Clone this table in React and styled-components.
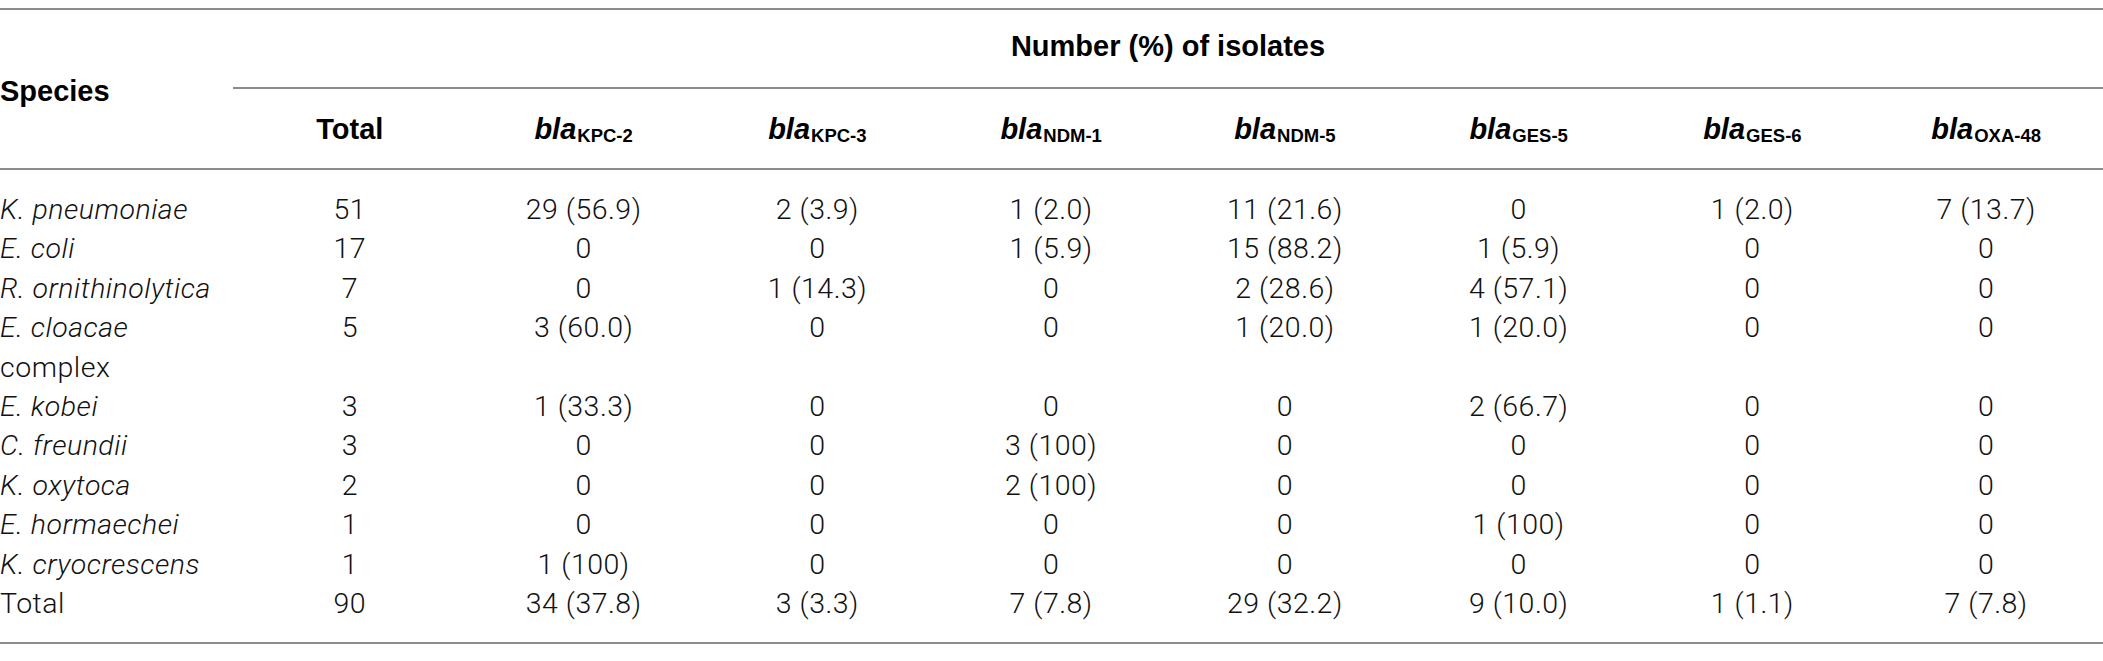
import React from "react";
import styled, { createGlobalStyle } from "styled-components";

const genes = ["KPC-2", "KPC-3", "NDM-1", "NDM-5", "GES-5", "GES-6", "OXA-48"];

const rows = [
  { species: "K. pneumoniae", total: "51", values: ["29 (56.9)", "2 (3.9)", "1 (2.0)", "11 (21.6)", "0", "1 (2.0)", "7 (13.7)"] },
  { species: "E. coli", total: "17", values: ["0", "0", "1 (5.9)", "15 (88.2)", "1 (5.9)", "0", "0"] },
  { species: "R. ornithinolytica", total: "7", values: ["0", "1 (14.3)", "0", "2 (28.6)", "4 (57.1)", "0", "0"] },
  { species: "E. cloacae", extra: "complex", total: "5", values: ["3 (60.0)", "0", "0", "1 (20.0)", "1 (20.0)", "0", "0"] },
  { species: "E. kobei", total: "3", values: ["1 (33.3)", "0", "0", "0", "2 (66.7)", "0", "0"] },
  { species: "C. freundii", total: "3", values: ["0", "0", "3 (100)", "0", "0", "0", "0"] },
  { species: "K. oxytoca", total: "2", values: ["0", "0", "2 (100)", "0", "0", "0", "0"] },
  { species: "E. hormaechei", total: "1", values: ["0", "0", "0", "0", "1 (100)", "0", "0"] },
  { species: "K. cryocrescens", total: "1", values: ["1 (100)", "0", "0", "0", "0", "0", "0"] },
  { species: "Total", plain: true, total: "90", values: ["34 (37.8)", "3 (3.3)", "7 (7.8)", "29 (32.2)", "9 (10.0)", "1 (1.1)", "7 (7.8)"] },
];

function App() {
  return (
    <>
      <GlobalStyle />
      <Page>
        <Table>
          <Head>
            <SpeciesHead>Species</SpeciesHead>
            <GroupHead>Number (%) of isolates</GroupHead>
            <ColHead>Total</ColHead>
            {genes.map((g) => (
              <ColHead key={g}>
                <Gene>bla</Gene>
                <Sub>{g}</Sub>
              </ColHead>
            ))}
          </Head>
          <Body>
            {rows.map((r) => (
              <Row key={r.species}>
                <SpeciesCell $plain={r.plain}>
                  {r.species}
                  {r.extra && <Plain>{r.extra}</Plain>}
                </SpeciesCell>
                <Cell>{r.total}</Cell>
                {r.values.map((v, i) => (
                  <Cell key={i}>{v}</Cell>
                ))}
              </Row>
            ))}
          </Body>
        </Table>
      </Page>
    </>
  );
}

export default App;

const GlobalStyle = createGlobalStyle`
  body {
    margin: 0;
    background: #ffffff;
    font-family: Roboto, "Liberation Sans", Arial, sans-serif;
    color: #111111;
  }
`;

const Page = styled.div`
  width: 2103px;
  height: 661px;
  padding-top: 8px;
  box-sizing: border-box;
  overflow: hidden;
`;

const Table = styled.div`
  border-top: 2px solid #8c8c8c;
  border-bottom: 2px solid #8c8c8c;
`;

const Head = styled.div`
  display: grid;
  grid-template-columns: 233px repeat(8, 233.75px);
  grid-template-rows: 79px 79px;
  border-bottom: 2px solid #8c8c8c;
  font-family: "Liberation Sans", Arial, sans-serif;
  font-weight: 700;
  font-size: 29px;
  color: #000;
`;

const SpeciesHead = styled.div`
  grid-row: 1 / span 2;
  display: flex;
  align-items: center;
  padding-top: 4px;
`;

const GroupHead = styled.div`
  grid-column: 2 / span 8;
  display: flex;
  align-items: center;
  justify-content: center;
  border-bottom: 2px solid #8c8c8c;
  padding-bottom: 4px;
`;

const ColHead = styled.div`
  display: flex;
  align-items: center;
  justify-content: center;
  white-space: nowrap;
  padding-top: 2px;
`;

const Gene = styled.span`
  font-style: italic;
`;

const Sub = styled.span`
  font-size: 18.5px;
  position: relative;
  top: 6px;
  margin-left: 1px;
`;

const Body = styled.div`
  padding: 20px 0 19px;
`;

const Row = styled.div`
  display: grid;
  grid-template-columns: 233px repeat(8, 233.75px);
  font-size: 28.5px;
  font-weight: 300;
  letter-spacing: 0.5px;
  line-height: 39.4px;
`;

const SpeciesCell = styled.div`
  font-style: ${(p) => (p.$plain ? "normal" : "italic")};
  white-space: nowrap;
`;

const Plain = styled.div`
  font-style: normal;
`;

const Cell = styled.div`
  text-align: center;
  white-space: nowrap;
`;
